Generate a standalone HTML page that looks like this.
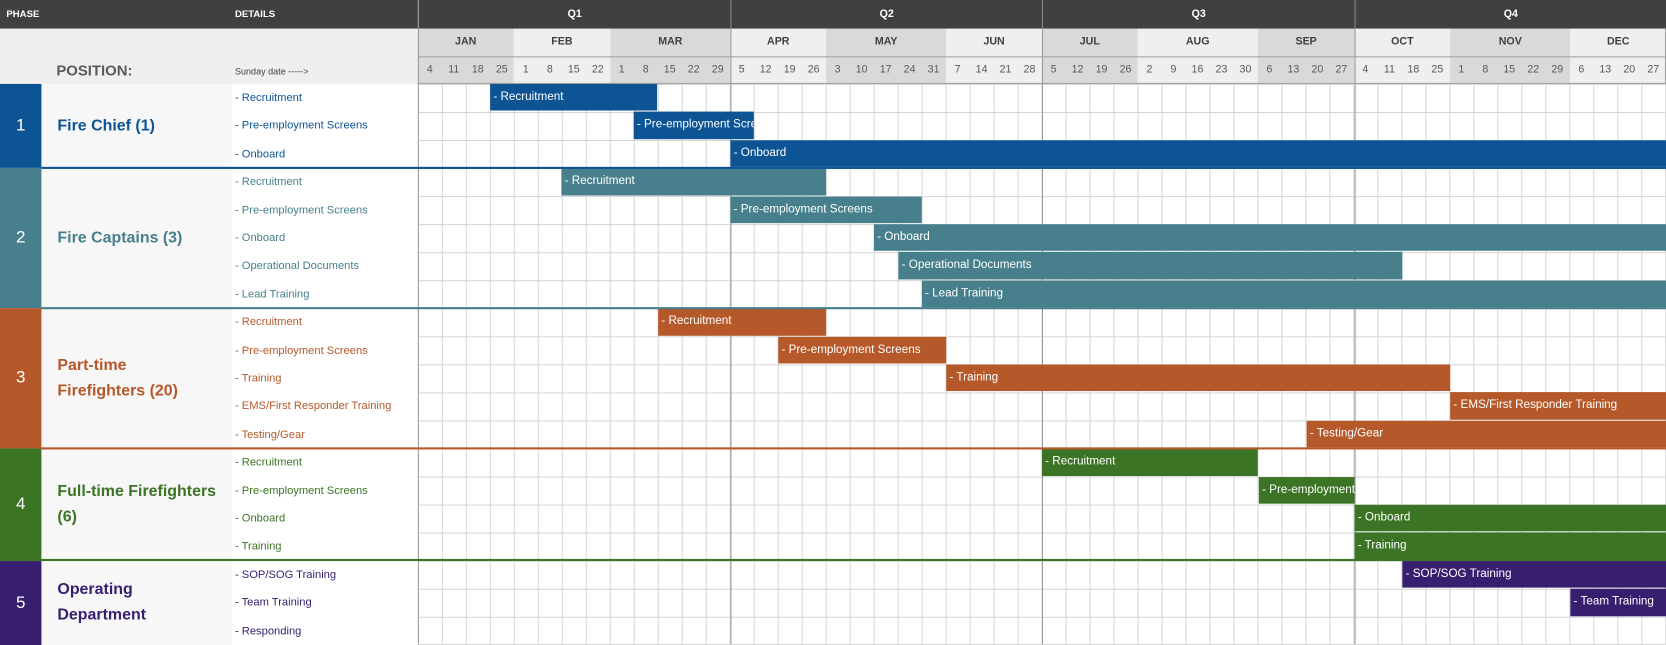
<!DOCTYPE html><html><head><meta charset="utf-8"><style>
*{margin:0;padding:0;box-sizing:border-box}
body{width:1666px;height:645px;background:#fff;font-family:"Liberation Sans",sans-serif;position:relative;overflow:hidden}
#w{position:absolute;left:0;top:0;width:1567px;height:607px;transform:scale(1.0632,1.0626);transform-origin:0 0}
.a{position:absolute}
.hd{background:#404040;color:#fff;font-weight:bold;font-size:9px}
.q{position:absolute;top:0;height:27px;line-height:27px;text-align:center;color:#fff;font-weight:bold;font-size:10px;border-left:1px solid #888}
.m{position:absolute;top:27px;height:26px;line-height:26px;text-align:center;font-weight:bold;font-size:10px;color:#404040}
.wk{height:26px;line-height:26px;width:22.577px;text-align:center;font-size:10px;color:#595959;flex:none}
.g{background:#d9d9d9}.l{background:#efefef}
.grid{position:absolute;left:393px;top:79px;width:1174px;height:528px;background-image:linear-gradient(to right,#d4d4d4 1px,transparent 1px),linear-gradient(to bottom,#d4d4d4 1px,transparent 1px);background-size:22.577px 26.4px}
.bar{position:absolute;height:25.4px;line-height:25px;color:#fff;font-size:11px;padding-left:3px;white-space:nowrap;overflow:hidden}
.d{position:absolute;left:221px;font-size:10.5px;height:26.4px;line-height:26px}
.ph{position:absolute;left:0;width:39px;color:#fff;font-size:16px;text-align:center}
.pos{position:absolute;left:39px;width:179px;background:#f7f7f7}
.pt{position:absolute;left:54px;font-weight:bold;font-size:15px;line-height:24px}
.ql{position:absolute;top:0;width:1px;background:#9a9a9a}
</style></head><body><div id="w">
<div class="a hd" style="left:0;top:0;width:1567px;height:27px"></div>
<div class="a" style="left:6px;top:8px;color:#fff;font-weight:bold;font-size:9px">PHASE</div>
<div class="a" style="left:221px;top:8px;color:#fff;font-weight:bold;font-size:9px">DETAILS</div>
<div class="q" style="left:393px;width:294px">Q1</div>
<div class="q" style="left:687px;width:293px">Q2</div>
<div class="q" style="left:980px;width:294px">Q3</div>
<div class="q" style="left:1274px;width:293px">Q4</div>
<div class="a" style="left:0;top:27px;width:393px;height:52px;background:#efefef"></div>
<div class="a" style="left:53px;top:58px;font-weight:bold;font-size:14px;color:#595959">POSITION:</div>
<div class="a" style="left:221px;top:62px;font-size:8.5px;color:#404040">Sunday date -----&gt;</div>
<div class="m g" style="left:393px;width:90px">JAN</div>
<div class="m l" style="left:483px;width:91px">FEB</div>
<div class="m g" style="left:574px;width:113px">MAR</div>
<div class="m l" style="left:687px;width:90px">APR</div>
<div class="m g" style="left:777px;width:113px">MAY</div>
<div class="m l" style="left:890px;width:90px">JUN</div>
<div class="m g" style="left:980px;width:90px">JUL</div>
<div class="m l" style="left:1070px;width:113px">AUG</div>
<div class="m g" style="left:1183px;width:91px">SEP</div>
<div class="m l" style="left:1274px;width:90px">OCT</div>
<div class="m g" style="left:1364px;width:113px">NOV</div>
<div class="m l" style="left:1477px;width:90px">DEC</div>
<div class="a g" style="left:393px;top:53px;width:90px;height:26px"></div>
<div class="a l" style="left:483px;top:53px;width:91px;height:26px"></div>
<div class="a g" style="left:574px;top:53px;width:113px;height:26px"></div>
<div class="a l" style="left:687px;top:53px;width:90px;height:26px"></div>
<div class="a g" style="left:777px;top:53px;width:113px;height:26px"></div>
<div class="a l" style="left:890px;top:53px;width:90px;height:26px"></div>
<div class="a g" style="left:980px;top:53px;width:90px;height:26px"></div>
<div class="a l" style="left:1070px;top:53px;width:113px;height:26px"></div>
<div class="a g" style="left:1183px;top:53px;width:91px;height:26px"></div>
<div class="a l" style="left:1274px;top:53px;width:90px;height:26px"></div>
<div class="a g" style="left:1364px;top:53px;width:113px;height:26px"></div>
<div class="a l" style="left:1477px;top:53px;width:90px;height:26px"></div>
<div class="a" style="left:393px;top:53px;width:1174px;height:1px;background:#a0a0a0"></div>
<div class="a" style="left:393px;top:78px;width:1174px;height:1px;background:#a0a0a0"></div>
<div class="a" style="left:1566px;top:27px;width:1px;height:52px;background:#a0a0a0"></div>
<div class="a" style="left:393px;top:53px;width:1174px;height:26px;display:flex">
<span class="wk">4</span><span class="wk">11</span><span class="wk">18</span><span class="wk">25</span><span class="wk">1</span><span class="wk">8</span><span class="wk">15</span><span class="wk">22</span><span class="wk">1</span><span class="wk">8</span><span class="wk">15</span><span class="wk">22</span><span class="wk">29</span><span class="wk">5</span><span class="wk">12</span><span class="wk">19</span><span class="wk">26</span><span class="wk">3</span><span class="wk">10</span><span class="wk">17</span><span class="wk">24</span><span class="wk">31</span><span class="wk">7</span><span class="wk">14</span><span class="wk">21</span><span class="wk">28</span><span class="wk">5</span><span class="wk">12</span><span class="wk">19</span><span class="wk">26</span><span class="wk">2</span><span class="wk">9</span><span class="wk">16</span><span class="wk">23</span><span class="wk">30</span><span class="wk">6</span><span class="wk">13</span><span class="wk">20</span><span class="wk">27</span><span class="wk">4</span><span class="wk">11</span><span class="wk">18</span><span class="wk">25</span><span class="wk">1</span><span class="wk">8</span><span class="wk">15</span><span class="wk">22</span><span class="wk">29</span><span class="wk">6</span><span class="wk">13</span><span class="wk">20</span><span class="wk">27</span>
</div>
<div class="grid"></div>

<div class="ph" style="top:79px;height:79px;line-height:79px;background:#0c5494">1</div>
<div class="ph" style="top:158px;height:132px;line-height:132px;background:#47808c">2</div>
<div class="ph" style="top:290px;height:132px;line-height:132px;background:#b5582a">3</div>
<div class="ph" style="top:422px;height:106px;line-height:106px;background:#3a7424">4</div>
<div class="ph" style="top:528px;height:79px;line-height:79px;background:#371e6e">5</div>
<div class="pos" style="top:79px;height:528px"></div>
<div class="a" style="left:218px;top:79px;width:175px;height:528px;background:#fff"></div>
<div class="pt" style="top:107px;color:#0c5494">Fire Chief (1)</div>
<div class="pt" style="top:212px;color:#47808c">Fire Captains (3)</div>
<div class="pt" style="top:332px;color:#b5582a">Part-time<br>Firefighters (20)</div>
<div class="pt" style="top:451px;color:#3a7424">Full-time Firefighters<br>(6)</div>
<div class="pt" style="top:543px;color:#371e6e">Operating<br>Department</div>

<div style="color:#0c5494">
<div class="d" style="top:79px">- Recruitment</div><div class="d" style="top:105.4px">- Pre-employment Screens</div><div class="d" style="top:131.8px">- Onboard</div></div>
<div style="color:#47808c">
<div class="d" style="top:158.2px">- Recruitment</div><div class="d" style="top:184.6px">- Pre-employment Screens</div><div class="d" style="top:211px">- Onboard</div><div class="d" style="top:237.4px">- Operational Documents</div><div class="d" style="top:263.8px">- Lead Training</div></div>
<div style="color:#b5582a">
<div class="d" style="top:290.2px">- Recruitment</div><div class="d" style="top:316.6px">- Pre-employment Screens</div><div class="d" style="top:343px">- Training</div><div class="d" style="top:369.4px">- EMS/First Responder Training</div><div class="d" style="top:395.8px">- Testing/Gear</div></div>
<div style="color:#3a7424">
<div class="d" style="top:422.2px">- Recruitment</div><div class="d" style="top:448.6px">- Pre-employment Screens</div><div class="d" style="top:475px">- Onboard</div><div class="d" style="top:501.4px">- Training</div></div>
<div style="color:#371e6e">
<div class="d" style="top:527.8px">- SOP/SOG Training</div><div class="d" style="top:554.2px">- Team Training</div><div class="d" style="top:580.6px">- Responding</div></div>

<div class="ql" style="left:393px;height:607px"></div>
<div class="ql" style="left:687px;top:27px;height:580px"></div>
<div class="ql" style="left:980px;top:27px;height:580px"></div>
<div class="ql" style="left:1274px;top:27px;height:580px"></div>

<div class="bar" style="background:#0c5494;top:79px;left:461px;width:157px">- Recruitment</div>
<div class="bar" style="background:#0c5494;top:105.4px;left:596px;width:113px">- Pre-employment Screens</div>
<div class="bar" style="background:#0c5494;top:131.8px;left:687px;width:880px">- Onboard</div>
<div class="bar" style="background:#47808c;top:158.2px;left:528px;width:249px">- Recruitment</div>
<div class="bar" style="background:#47808c;top:184.6px;left:687px;width:180px">- Pre-employment Screens</div>
<div class="bar" style="background:#47808c;top:211px;left:822px;width:745px">- Onboard</div>
<div class="bar" style="background:#47808c;top:237.4px;left:845px;width:474px">- Operational Documents</div>
<div class="bar" style="background:#47808c;top:263.8px;left:867px;width:700px">- Lead Training</div>
<div class="bar" style="background:#b5582a;top:290.2px;left:619px;width:158px">- Recruitment</div>
<div class="bar" style="background:#b5582a;top:316.6px;left:732px;width:158px">- Pre-employment Screens</div>
<div class="bar" style="background:#b5582a;top:343px;left:890px;width:474px">- Training</div>
<div class="bar" style="background:#b5582a;top:369.4px;left:1364px;width:203px">- EMS/First Responder Training</div>
<div class="bar" style="background:#b5582a;top:395.8px;left:1229px;width:338px">- Testing/Gear</div>
<div class="bar" style="background:#3a7424;top:422.2px;left:980px;width:203px">- Recruitment</div>
<div class="bar" style="background:#3a7424;top:448.6px;left:1184px;width:90px">- Pre-employment Screens</div>
<div class="bar" style="background:#3a7424;top:475px;left:1274px;width:293px">- Onboard</div>
<div class="bar" style="background:#3a7424;top:501.4px;left:1274px;width:293px">- Training</div>
<div class="bar" style="background:#371e6e;top:527.8px;left:1319px;width:248px">- SOP/SOG Training</div>
<div class="bar" style="background:#371e6e;top:554.2px;left:1477px;width:90px">- Team Training</div>

<div class="a" style="left:39px;top:157px;width:1528px;height:2px;background:#0c5494"></div>
<div class="a" style="left:39px;top:289px;width:1528px;height:2px;background:#47808c"></div>
<div class="a" style="left:39px;top:421px;width:1528px;height:2px;background:#b5582a"></div>
<div class="a" style="left:39px;top:526px;width:1528px;height:2px;background:#3a7424"></div>
<div class="a" style="left:393px;top:606px;width:1174px;height:1px;background:#d4d4d4"></div>
</div></body></html>
